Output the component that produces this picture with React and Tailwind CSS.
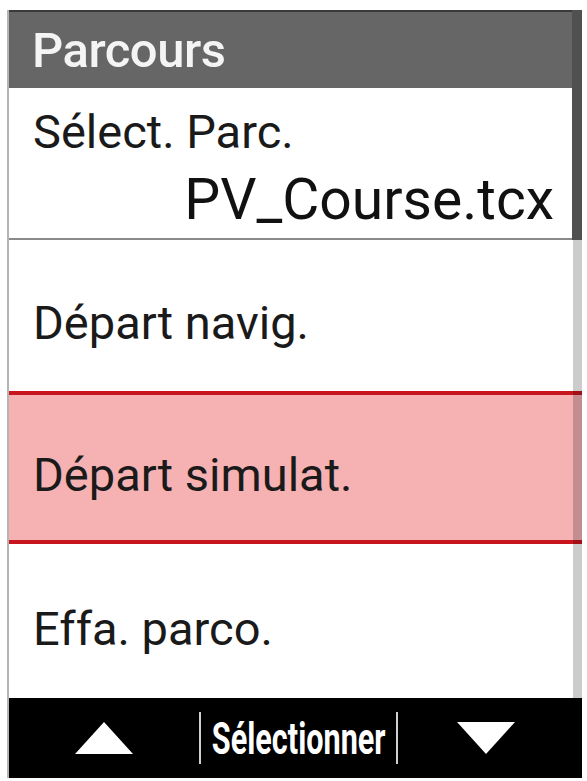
export default function App() {
    const font = { fontFamily: 'Roboto, "Liberation Sans", sans-serif' };
    return (
        <div className="w-[587px] h-[781px] bg-white pt-[10px] pl-[7px]" style={font}>
            <div className="relative w-[575px] h-[768px] border-l-2 border-[#b5b5b5] flex flex-col">
                <div className="h-[78px] bg-[#666666] border-t-2 border-[#3a3a3a] flex items-center pl-[23px]">
                    <span className="text-[49px] font-medium text-[#f4f4f4] leading-none tracking-[-0.5px]">Parcours</span>
                </div>

                <div className="h-[152px] bg-white border-b-2 border-[#8a8a8a] flex flex-col pl-[24px] pr-[28px] pt-[20px]">
                    <span className="text-[47px] text-[#1a1a1a] leading-none">Sélect. Parc.</span>
                    <span className="text-[57px] text-[#111] leading-none self-end mt-[16px]">PV_Course.tcx</span>
                </div>

                <div className="h-[151px] bg-white flex items-center pl-[24px] pt-[14px]">
                    <span className="text-[47px] text-[#1a1a1a] leading-none">Départ navig.</span>
                </div>

                <div className="h-[153px] bg-[#f6b1b3] border-y-4 border-[#c8141c] flex items-center pl-[24px] pt-[14px]">
                    <span className="text-[47px] text-[#1a1a1a] leading-none">Départ simulat.</span>
                </div>

                <div className="h-[154px] bg-white flex items-center pl-[24px] pt-[14px]">
                    <span className="text-[47px] text-[#1a1a1a] leading-none">Effa. parco.</span>
                </div>

                <div className="flex-1 bg-black flex items-center">
                    <div className="w-[190px] flex justify-center">
                        <svg width="60" height="34" viewBox="0 0 60 34">
                            <polygon points="30,1 59,33 1,33" fill="#fff" />
                        </svg>
                    </div>
                    <div className="w-[2px] h-[52px] bg-[#cfcfcf]" />
                    <div className="w-[195px] flex justify-center">
                        <span className="inline-block scale-x-[0.68] text-[45px] font-bold text-white leading-none">Sélectionner</span>
                    </div>
                    <div className="w-[2px] h-[52px] bg-[#cfcfcf]" />
                    <div className="flex-1 flex justify-center pr-[8px]">
                        <svg width="60" height="34" viewBox="0 0 60 34">
                            <polygon points="1,1 59,1 30,33" fill="#fff" />
                        </svg>
                    </div>
                </div>

                <div className="absolute right-0 top-0 w-[10px] h-[230px] bg-[#505050]" />
                <div className="absolute right-0 top-[230px] w-[9px] h-[460px] bg-black/20" />
            </div>
        </div>
    );
}
